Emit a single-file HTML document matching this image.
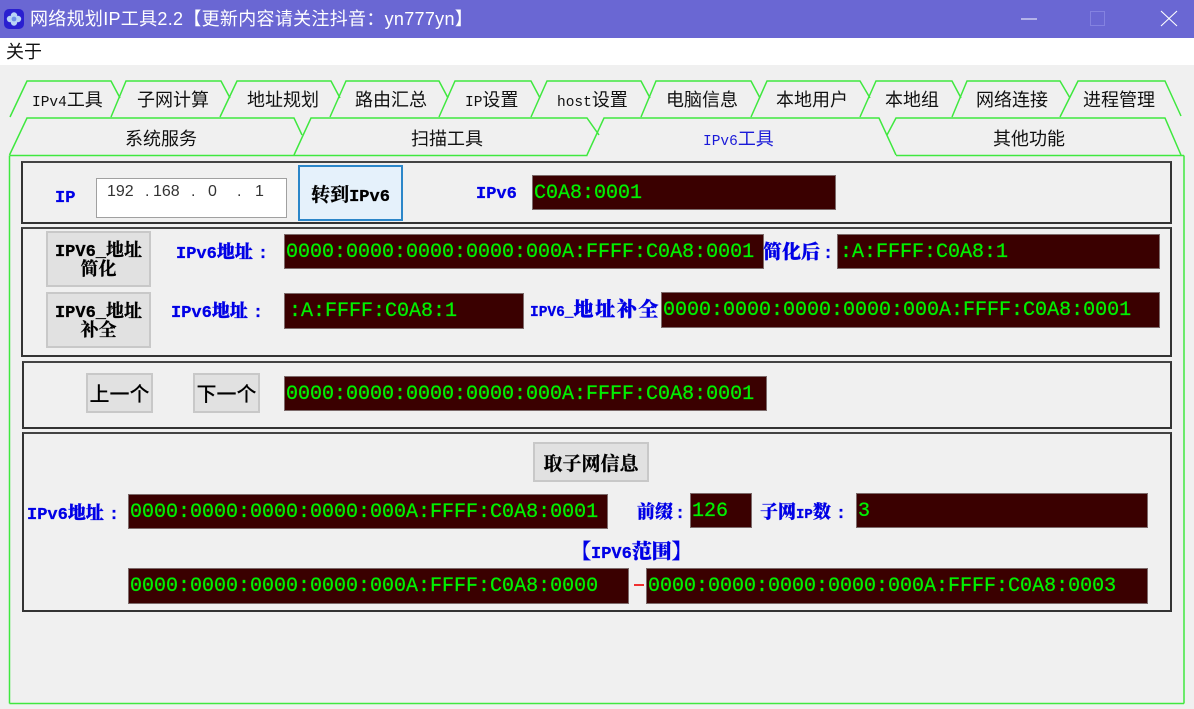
<!DOCTYPE html>
<html lang="zh">
<head>
<meta charset="utf-8">
<title>网络规划IP工具2.2</title>
<style>
html,body{margin:0;padding:0;width:1194px;height:709px;overflow:hidden;background:#f0f0f0}
#w{position:relative;width:1194px;height:709px;overflow:hidden;background:#f0f0f0;font-family:"Liberation Sans","Noto Sans CJK SC",sans-serif}
#w>*{position:absolute;box-sizing:border-box}
.tb{left:0;top:0;width:1194px;height:38px;background:#6a67d3}
.mn{left:0;top:38px;width:1194px;height:27px;background:#fff}
.tt{left:30px;top:7px;color:#fff;font-size:18px;line-height:24px;white-space:nowrap;letter-spacing:.3px}
.m{left:6px;top:40px;font-size:18px;line-height:24px;color:#111}
.g{border:2px solid #333;border-top-color:#444}
.d{background:#3a0000;border:1px solid #7c6a6a;color:#00f000;font:20px/36px "Liberation Mono",monospace;padding-left:1px;white-space:pre;overflow:hidden;-webkit-text-stroke:.25px #00f000}
.b{background:#e1e1e1;border:2px solid #c8c8c8;color:#000;text-align:center;font-family:"Liberation Mono","Noto Serif CJK SC",serif;font-weight:700;display:flex;align-items:center;justify-content:center;white-space:nowrap;-webkit-text-stroke:.3px #000}
.l{color:#0000e6;font-family:"Noto Serif CJK SC",serif;font-weight:900;font-size:18px;line-height:24px;white-space:pre;-webkit-text-stroke:.3px #0000e6}
.l i,.b i{font:700 17px "Liberation Mono",monospace}
.t{font-size:18px;line-height:24px;color:#111;white-space:nowrap;font-family:"Noto Sans CJK SC",sans-serif}
.t i{font:14.5px "Liberation Mono",monospace}
.n{font-size:16px;line-height:20px;color:#333}
</style>
</head>
<body>
<div id="w">
<div class="tb"></div>
<svg style="left:3px;top:8px" width="22" height="22" viewBox="0 0 22 22"><rect x="1" y="1" width="20" height="20" rx="5" fill="#2a1fd0"/><circle cx="11" cy="7.5" r="3.2" fill="#b9d4f5"/><circle cx="7" cy="11" r="3.2" fill="#b9d4f5"/><circle cx="15" cy="11" r="3.2" fill="#b9d4f5"/><circle cx="11" cy="14.5" r="3.2" fill="#b9d4f5"/><circle cx="11" cy="11" r="2.4" fill="#6f8fe8"/></svg>
<div class="tt">网络规划IP工具2.2【更新内容请关注抖音：yn777yn】</div>
<svg style="left:1010px;top:0" width="184" height="38" viewBox="0 0 184 38" fill="none"><path d="M11 19H27" stroke="#fff" stroke-width="1"/><rect x="80.5" y="11.5" width="14" height="14" stroke="#8482e0"/><path d="M151 11L167 26M167 11L151 26" stroke="#fff" stroke-width="1.1"/></svg>
<div class="mn"></div>
<div class="m">关于</div>

<svg style="left:0;top:75px" width="1194" height="634" viewBox="0 75 1194 634" fill="none" stroke="#3fe83f" stroke-width="1.5">
<path d="M9.5 703.5V155.5M9.5 703.5H1184M1184 155.5V703.5"/>
<path d="M1181 116L1165 81H1078L1060 117"/>
<path d="M1070 98L1060 81H967L952 117"/>
<path d="M961 98L952 81H876L860 117"/>
<path d="M870 98L860 81H767L751 117"/>
<path d="M760 98L751 81H656L641 117"/>
<path d="M650 98L641 81H547L531 117"/>
<path d="M540 98L531 81H455L439 117"/>
<path d="M448 98L439 81H346L330 117"/>
<path d="M340 98L331 81H237L220 117"/>
<path d="M230 98L221 81H126L111 117"/>
<path d="M120 98L111 81H27L10 117"/>
<path d="M887 135L896 118H1165L1181 155"/>
<path d="M599 135L587 118H311L294 155"/>
<path d="M302 135L294 118H27L9.5 155"/>
<path d="M587 155L604 118H879L896 155"/>
<path d="M9.5 155.5H587.5M896 155.5H1184"/>
</svg>

<div class="t" style="left:32px;top:87px"><i>IPv4</i>工具</div>
<div class="t" style="left:137px;top:87px">子网计算</div>
<div class="t" style="left:247px;top:87px">地址规划</div>
<div class="t" style="left:355px;top:87px">路由汇总</div>
<div class="t" style="left:465px;top:87px"><i>IP</i>设置</div>
<div class="t" style="left:557px;top:87px"><i>host</i>设置</div>
<div class="t" style="left:666px;top:87px">电脑信息</div>
<div class="t" style="left:776px;top:87px">本地用户</div>
<div class="t" style="left:885px;top:87px">本地组</div>
<div class="t" style="left:976px;top:87px">网络连接</div>
<div class="t" style="left:1083px;top:87px">进程管理</div>
<div class="t" style="left:125px;top:126px">系统服务</div>
<div class="t" style="left:411px;top:126px">扫描工具</div>
<div class="t" style="left:703px;top:126px;color:#1a1ad8"><i>IPv6</i>工具</div>
<div class="t" style="left:993px;top:126px">其他功能</div>

<div class="g" style="left:21px;top:161px;width:1151px;height:63px"></div>
<div class="g" style="left:21px;top:227px;width:1151px;height:130px"></div>
<div class="g" style="left:22px;top:361px;width:1150px;height:68px"></div>
<div class="g" style="left:22px;top:432px;width:1150px;height:180px"></div>

<div class="l" style="left:55px;top:183px"><i>IP</i></div>
<div style="left:96px;top:178px;width:191px;height:40px;background:#fff;border:1.5px solid #a0a0a0"></div>
<div class="n" style="left:107px;top:182px">192</div>
<div class="n" style="left:145px;top:182px">.</div>
<div class="n" style="left:153px;top:182px">168</div>
<div class="n" style="left:191px;top:182px">.</div>
<div class="n" style="left:208px;top:182px">0</div>
<div class="n" style="left:237px;top:182px">.</div>
<div class="n" style="left:255px;top:182px">1</div>
<div class="b" style="left:298px;top:165px;width:105px;height:56px;background:#e5f1fb;border-color:#2b86c9;font-size:19px"><span>转到<i>IPv6</i></span></div>
<div class="l" style="left:476px;top:179px"><i>IPv6</i></div>
<div class="d" style="left:532px;top:175px;width:304px;height:35px">C0A8:0001</div>

<div class="b" style="left:46px;top:231px;width:105px;height:56px;font-size:18px;line-height:19px;padding-top:5px"><span><i>IPV6_</i>地址<br>简化</span></div>
<div class="b" style="left:46px;top:292px;width:105px;height:56px;font-size:18px;line-height:19px;padding-top:5px"><span><i>IPV6_</i>地址<br>补全</span></div>
<div class="l" style="left:176px;top:239px"><i>IPv6</i>地址<i style="margin-left:5px">:</i></div>
<div class="d" style="left:284px;top:234px;width:480px;height:35px">0000:0000:0000:0000:000A:FFFF:C0A8:0001</div>
<div class="l" style="left:763px;top:239px;font-size:19px">简化后<i style="margin-left:3px">:</i></div>
<div class="d" style="left:837px;top:234px;width:323px;height:35px;padding-left:2px">:A:FFFF:C0A8:1</div>
<div class="l" style="left:171px;top:298px"><i>IPv6</i>地址<i style="margin-left:5px">:</i></div>
<div class="d" style="left:284px;top:293px;width:240px;height:36px;padding-left:4px">:A:FFFF:C0A8:1</div>
<div class="l" style="left:530px;top:296px;font-size:20px;letter-spacing:1.6px"><i style="font-size:14.5px;letter-spacing:0">IPV6_</i>地址补全</div>
<div class="d" style="left:661px;top:292px;width:499px;height:36px">0000:0000:0000:0000:000A:FFFF:C0A8:0001</div>

<div class="b" style="left:86px;top:373px;width:67px;height:40px;font-size:20px;font-weight:500;font-family:'Noto Sans CJK SC',sans-serif;padding-bottom:1px;-webkit-text-stroke:0">上一个</div>
<div class="b" style="left:193px;top:373px;width:67px;height:40px;font-size:20px;font-weight:500;font-family:'Noto Sans CJK SC',sans-serif;padding-bottom:1px;-webkit-text-stroke:0">下一个</div>
<div class="d" style="left:284px;top:376px;width:483px;height:35px">0000:0000:0000:0000:000A:FFFF:C0A8:0001</div>

<div class="b" style="left:533px;top:442px;width:116px;height:40px;font-size:19px">取子网信息</div>
<div class="l" style="left:27px;top:500px"><i>IPv6</i>地址<i style="margin-left:5px">:</i></div>
<div class="d" style="left:128px;top:494px;width:480px;height:35px">0000:0000:0000:0000:000A:FFFF:C0A8:0001</div>
<div class="l" style="left:637px;top:499px">前缀<i style="margin-left:2px">:</i></div>
<div class="d" style="left:690px;top:493px;width:62px;height:35px">126</div>
<div class="l" style="left:760px;top:499px">子网<i style="font-size:14px">IP</i>数<i style="margin-left:5px">:</i></div>
<div class="d" style="left:856px;top:493px;width:292px;height:35px">3</div>
<div class="l" style="left:571px;top:538px;font-size:20px">【<i>IPV6</i>范围】</div>
<div class="d" style="left:128px;top:568px;width:501px;height:36px">0000:0000:0000:0000:000A:FFFF:C0A8:0000</div>
<div style="left:634px;top:584px;width:10px;height:2px;background:#f03030"></div>
<div class="d" style="left:646px;top:568px;width:502px;height:36px">0000:0000:0000:0000:000A:FFFF:C0A8:0003</div>
</div>
</body>
</html>
